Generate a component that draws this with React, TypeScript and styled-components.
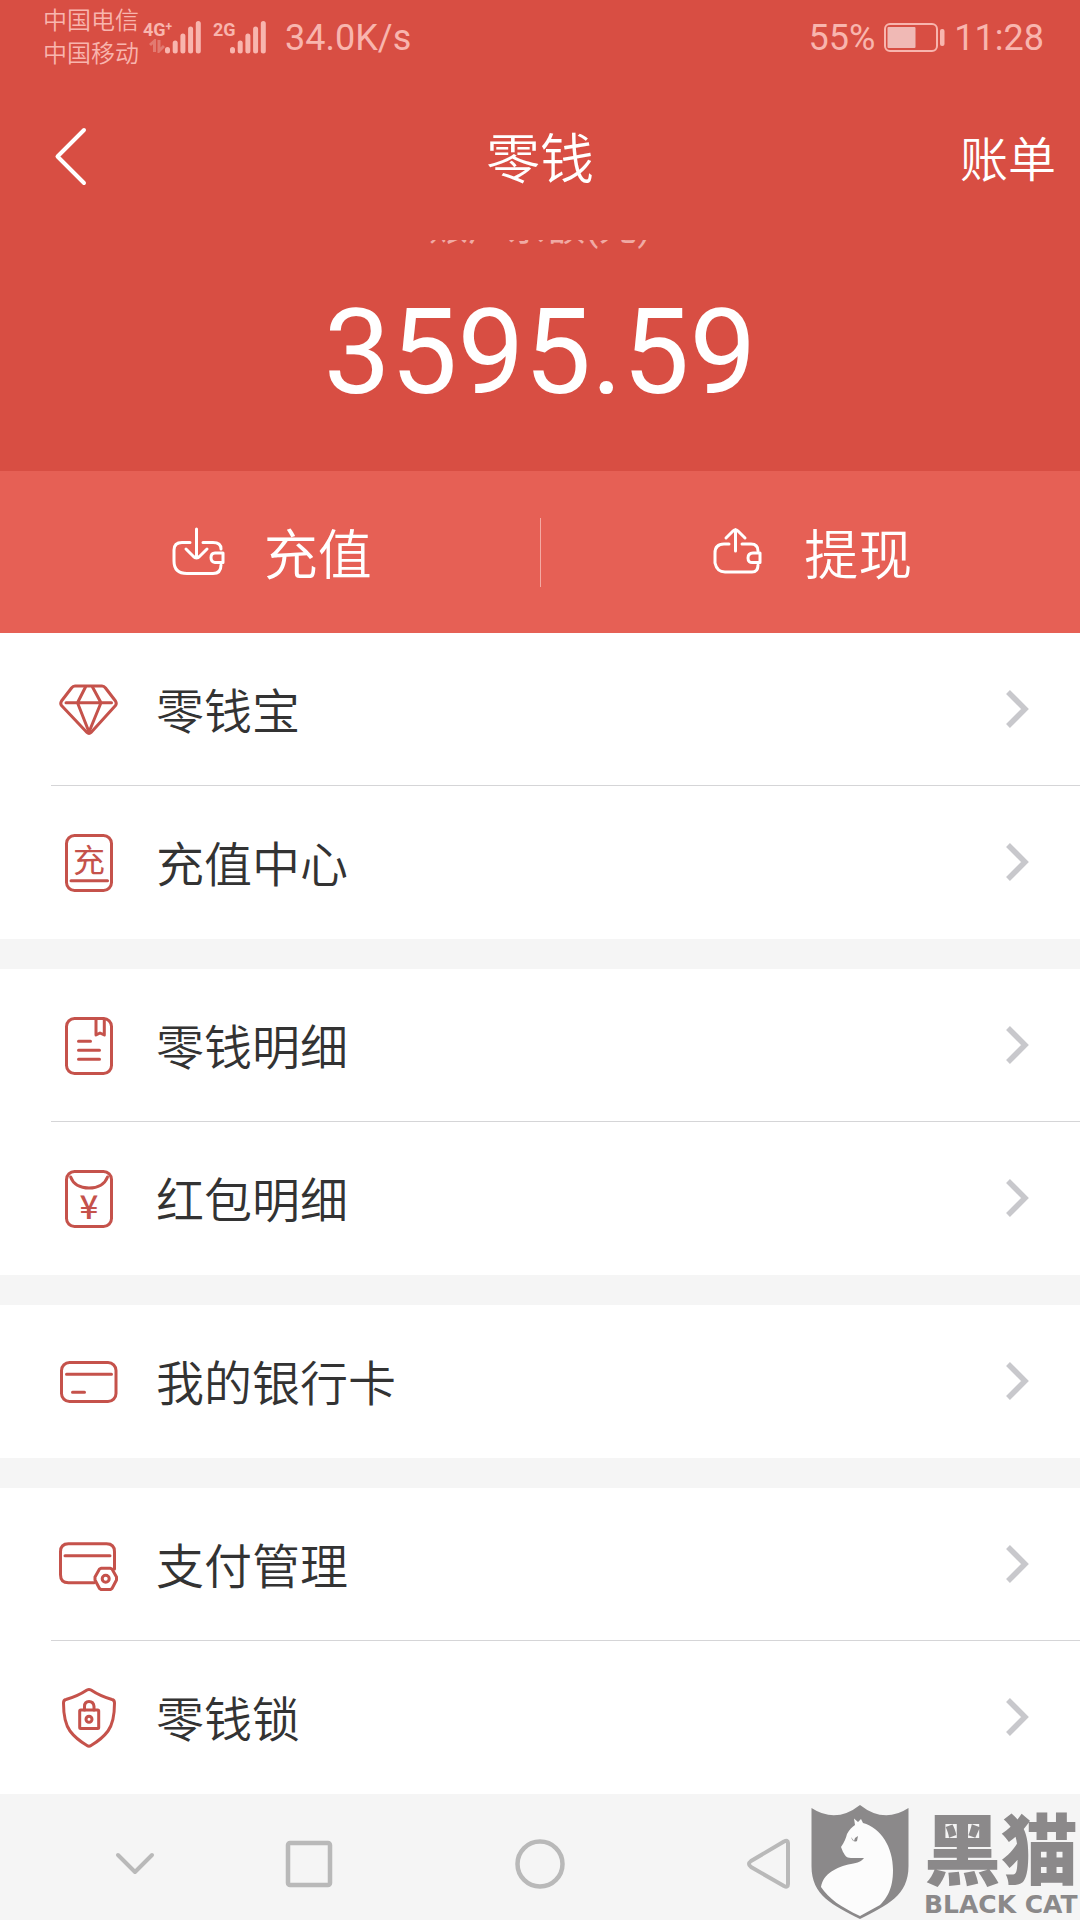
import React from 'react';
import styled, { createGlobalStyle } from 'styled-components';

const sans = `Roboto, "Noto Sans CJK SC", sans-serif`;
const cjk = `"Noto Sans CJK SC", sans-serif`;
const red = '#d84e43';
const iconRed = '#c5524b';
const statusInk = '#f8b5ae';

const GlobalStyle = createGlobalStyle`
  * { box-sizing: border-box; }
  body { margin: 0; background: #f5f5f5; font-family: ${sans}; color: #333; }
  button { border: 0; padding: 0; margin: 0; background: none; font: inherit; color: inherit; cursor: pointer; }
  svg { display: block; flex: none; }
`;

const Page = styled.div`
  display: flex;
  flex-direction: column;
  min-height: 100vh;
`;

const Header = styled.header`
  background: ${red};
  color: #fff;
`;

const StatusBar = styled.div`
  display: flex;
  align-items: center;
  justify-content: space-between;
  height: 75px;
  padding: 0 36px 0 43px;
  color: ${statusInk};
  font-size: 36px;
  line-height: 40px;
`;

const StatusGroup = styled.div<{ $gap: number }>`
  display: flex;
  align-items: center;
  gap: ${(p) => p.$gap}px;
`;

const Carriers = styled.div`
  font-size: 24px;
  line-height: 33px;
  font-weight: 350;
`;

const Signal = styled.div`
  display: flex;
  align-items: flex-start;
`;

const NetType = styled.div<{ $width: number }>`
  display: flex;
  flex-direction: column;
  align-items: flex-end;
  width: ${(p) => p.$width}px;
  font: bold 18px/18px Roboto, sans-serif;
  white-space: nowrap;
`;

const NetLabel = styled.span`
  display: flex;
  align-self: flex-start;
  line-height: 18px;
`;

const Plus = styled.sup`
  font-size: 12px;
  line-height: 12px;
  vertical-align: top;
`;

const TitleBar = styled.div`
  display: grid;
  grid-template-columns: 1fr auto 1fr;
  align-items: center;
  height: 165px;
  padding: 0 24px 4px;
`;

const BackButton = styled.button`
  justify-self: start;
  padding: 10px 24px;
`;

const Title = styled.h1`
  margin: 0;
  font-family: ${cjk};
  font-size: 54px;
  line-height: 72px;
  font-weight: 350;
`;

const BillButton = styled.button`
  justify-self: end;
  font-family: ${cjk};
  font-size: 48px;
  line-height: 64px;
  font-weight: 350;
`;

const Balance = styled.section`
  display: flex;
  flex-direction: column;
  align-items: center;
  padding-bottom: 58px;
`;

const LabelWindow = styled.div`
  display: flex;
  align-items: flex-end;
  height: 12px;
  overflow: hidden;
  color: #f0aaa4;
  font-size: 39px;
  line-height: 50px;
`;

const Amount = styled.div`
  margin-top: 41px;
  font-size: 119px;
  line-height: 120px;
`;

const Actions = styled.div`
  display: flex;
  align-items: center;
  height: 162px;
  background: #e66055;
  color: #fff;
`;

const Action = styled.button`
  display: flex;
  flex: 1;
  align-items: center;
  justify-content: center;
  gap: 42px;
  height: 100%;
  font-family: ${cjk};
  font-size: 54px;
  line-height: 72px;
  font-weight: 350;
`;

const ActionRule = styled.div`
  width: 1px;
  height: 69px;
  background: #f4aaa3;
`;

const Groups = styled.main`
  display: flex;
  flex-direction: column;
  gap: 30px;
`;

const Group = styled.section`
  padding-left: 51px;
  background: #fff;
`;

const Row = styled.button`
  display: flex;
  align-items: center;
  width: 100%;
  height: 153px;
  padding: 0 50px 0 7px;
  border-bottom: 1px solid #d5d5d7;
  text-align: left;

  &:last-child {
    border-bottom-color: transparent;
  }
`;

const RowLabel = styled.span`
  flex: 1;
  margin-left: 38px;
  padding-bottom: 2px;
  font-family: ${cjk};
  font-size: 48px;
  line-height: 64px;
  font-weight: 350;
`;

const NavBar = styled.nav`
  position: relative;
  display: grid;
  grid-template-columns: 29fr 29fr 48fr 29fr 29fr;
  height: 126px;
  padding: 18px 48px 0;
  background: #f5f5f5;
`;

const NavButton = styled.button`
  display: flex;
  align-items: center;
  justify-content: center;
  height: 108px;
  padding-bottom: 4px;
`;

const Watermark = styled.div`
  position: absolute;
  right: 0;
  bottom: 0;
  display: flex;
  gap: 15px;
  height: 116px;
  color: #8b898a;
`;

const Brand = styled.div`
  display: flex;
  flex-direction: column;
  justify-content: space-between;
  width: 156px;
  white-space: nowrap;
`;

const BrandName = styled.strong`
  font: 900 77px/84px ${cjk};
`;

const BrandLatin = styled.strong`
  font: bold 25px/30px "DejaVu Sans", sans-serif;
`;

function Bars() {
  return (
    <svg width="36" height="34" viewBox="0 0 36 34" stroke={statusInk} strokeWidth="5" strokeLinecap="round">
      <path d="M2.5 28.500V30M10.2 22V30M17.9 15V30M25.6 8V30M33.3 2.500V30" />
    </svg>
  );
}

function DataArrows() {
  return (
    <svg width="16" height="14" viewBox="0 0 16 14" fill="none" stroke="#e27a71" strokeWidth="3">
      <path d="M1 6L5.500 2V13M10 1V12L15 7" />
    </svg>
  );
}

function Battery() {
  return (
    <svg width="61" height="30" viewBox="0 0 61 30">
      <rect x="1" y="1" width="52" height="27" rx="5" fill="none" stroke={statusInk} strokeWidth="2" />
      <rect x="3.500" y="4" width="28" height="21" rx="1" fill="#f0b9b5" />
      <rect x="56" y="6" width="4.500" height="17" rx="2" fill={statusInk} />
    </svg>
  );
}

function WalletIcon({ out = false }: { out?: boolean }) {
  return (
    <svg width="54" height="54" viewBox="0 0 54 54" overflow="visible" fill="none" stroke="#fff" strokeWidth="3" strokeLinecap="round" strokeLinejoin="round">
      {out ? (
        <>
          <path d="M21 19H16Q7 19 7 28V38Q9 47 17 47H44Q50 47 50 40M34 19H43Q50 19 50 26" />
          <path d="M27.500 26V4.500M18 13L25 6Q27.500 3.500 30 6L37 13" />
          <path d="M52 28H45Q40 28 40 33T45 37.500H52Z" />
        </>
      ) : (
        <>
          <path d="M22 17.500H14Q6 17.500 6 25V36Q6 48.500 19 48.500H45Q53 48.500 53 40M35 17.500H45Q53 17.500 53 24" />
          <path d="M28.500 4V32M18 24L25 31Q28.500 35 32 31L39 24" />
          <path d="M55 28H47Q43 28 43 32.500T47 37.500H55Z" />
        </>
      )}
    </svg>
  );
}

type IconName = 'diamond' | 'topup' | 'detail' | 'packet' | 'card' | 'manage' | 'lock';

const frame = <rect x="8.500" y="3.500" width="45" height="55" rx="8" />;

const drawings: Record<IconName, React.ReactNode> = {
  diamond: (
    <>
      <path d="M17 7H44Q46 7 47.500 9L57.500 22Q59 24.500 57.500 26.500L33 53.500Q31 55.500 29 53.500L3.500 26.500Q2 24.500 3.500 22L13.500 9Q15 7 17 7Z" />
      <path d="M8 23.700H53.500M27.500 8L19.500 23.700L31 53L43 23.700L34.500 8" />
    </>
  ),
  topup: (
    <>
      {frame}
      <path d="M13 48.700H49.500" />
      <text x="31" y="40" textAnchor="middle" fontSize="32" fontFamily="Noto Sans CJK SC" fill={iconRed} stroke="none">充</text>
    </>
  ),
  detail: (
    <>
      {frame}
      <path d="M38 4V20L42 18L46.300 20V4M20.500 26.300H32.500M20.500 35.300H41.500M20.500 44.300H41.500" />
    </>
  ),
  packet: (
    <>
      {frame}
      <path d="M12.700 9C15 16 22 20 31 20S47 16 49.500 9" />
      <text x="31" y="51" textAnchor="middle" fontSize="33" fontWeight="500" fontFamily="Noto Sans CJK SC" fill={iconRed} stroke="none">¥</text>
    </>
  ),
  card: (
    <>
      <rect x="3.500" y="11.500" width="54.500" height="39" rx="8" />
      <path d="M8.500 23.300H53.500M14.500 41.300H26.500" />
    </>
  ),
  manage: (
    <>
      <path d="M36 48.700H10.500Q2.500 48.700 2.500 40.700V17.700Q2.500 9.700 10.500 9.700H48.500Q56.500 9.700 56.500 17.700V35M7 21.700H52" />
      <path d="M43 34.300H52.500L54 35L58.500 43V46L54 54.500L52.500 55.500H43L41.500 54.500L37 46V43L41.500 35Z" />
      <circle cx="47.700" cy="44.700" r="3.500" />
    </>
  ),
  lock: (
    <>
      <path d="M29 3Q31 2 33 3Q42 9 54 12.500Q56.500 13 56.500 16Q56.500 35 50 44Q44 52 33 58.500Q31 60 29 58.500Q18 52 12 44Q5.500 35 5.500 16Q5.500 13 8 12.500Q20 9 29 3Z" />
      <rect x="21.700" y="23" width="19" height="18.500" rx="1" />
      <path d="M26.500 23V19.500Q26.500 14.500 31 14.500T36 19.500V23" />
      <circle cx="31" cy="32.300" r="3" />
    </>
  ),
};

function RowIcon({ name }: { name: IconName }) {
  return (
    <svg width="60" height="60" viewBox="0 0 60 60" overflow="visible" fill="none" stroke={iconRed} strokeWidth="3" strokeLinecap="round" strokeLinejoin="round">
      {drawings[name]}
    </svg>
  );
}

const groups: { icon: IconName; label: string }[][] = [
  [
    { icon: 'diamond', label: '零钱宝' },
    { icon: 'topup', label: '充值中心' },
  ],
  [
    { icon: 'detail', label: '零钱明细' },
    { icon: 'packet', label: '红包明细' },
  ],
  [{ icon: 'card', label: '我的银行卡' }],
  [
    { icon: 'manage', label: '支付管理' },
    { icon: 'lock', label: '零钱锁' },
  ],
];

const navShapes: { label: string; shape: React.ReactNode }[] = [
  { label: '收起', shape: <path d="M9 17L26 34L43 17" strokeWidth="4" /> },
  { label: '最近任务', shape: <rect x="5" y="5" width="42" height="42" rx="2" /> },
  { label: '主屏幕', shape: <circle cx="26" cy="26" r="22.500" /> },
  { label: '返回', shape: <path d="M39 3.500Q43 1.500 43 5V46Q43 50 39 48L6 29Q2 26 6 23Z" strokeWidth="4" /> },
];

export default function App() {
  return (
    <Page>
      <GlobalStyle />
      <Header>
        <StatusBar>
          <StatusGroup $gap={19}>
            <StatusGroup $gap={12}>
              <StatusGroup $gap={4}>
                <Carriers>
                  <div>中国电信</div>
                  <div>中国移动</div>
                </Carriers>
                <Signal>
                  <NetType $width={22}>
                    <NetLabel>4G<Plus>+</Plus></NetLabel>
                    <DataArrows />
                  </NetType>
                  <Bars />
                </Signal>
              </StatusGroup>
              <Signal>
                <NetType $width={17}>
                  <NetLabel>2G</NetLabel>
                </NetType>
                <Bars />
              </Signal>
            </StatusGroup>
            <span>34.0K/s</span>
          </StatusGroup>
          <StatusGroup $gap={9}>
            <span>55%</span>
            <Battery />
            <span>11:28</span>
          </StatusGroup>
        </StatusBar>
        <TitleBar>
          <BackButton aria-label="返回">
            <svg width="40" height="60" viewBox="0 0 40 60" fill="none" stroke="#fff" strokeWidth="4" strokeLinecap="round" strokeLinejoin="round">
              <path d="M36 4L9.500 30.500L36 57" />
            </svg>
          </BackButton>
          <Title>零钱</Title>
          <BillButton>账单</BillButton>
        </TitleBar>
        <Balance>
          <LabelWindow>账户余额(元)</LabelWindow>
          <Amount>3595.59</Amount>
        </Balance>
      </Header>
      <Actions>
        <Action>
          <WalletIcon />
          充值
        </Action>
        <ActionRule />
        <Action>
          <WalletIcon out />
          提现
        </Action>
      </Actions>
      <Groups>
        {groups.map((rows) => (
          <Group key={rows[0].icon}>
            {rows.map((row) => (
              <Row key={row.icon}>
                <RowIcon name={row.icon} />
                <RowLabel>{row.label}</RowLabel>
                <svg width="24" height="40" viewBox="0 0 24 40" fill="none" stroke="#c8c8cc" strokeWidth="5.500">
                  <path d="M2 3L19 20L2 37" />
                </svg>
              </Row>
            ))}
          </Group>
        ))}
      </Groups>
      <NavBar>
        {navShapes.map((item) => (
          <NavButton key={item.label} aria-label={item.label}>
            <svg width="52" height="52" viewBox="0 0 52 52" fill="none" stroke="#b9b9b9" strokeWidth="4.500" strokeLinecap="round" strokeLinejoin="round">
              {item.shape}
            </svg>
          </NavButton>
        ))}
        <Watermark>
          <svg width="98" height="116" viewBox="0 0 98 116">
            <path d="M.5 4Q25 20 49 1Q73 20 97.500 4V62C97.500 92 76 101 49 115C22 101 .5 92 .5 62Z" fill="#8b898a" />
            <path d="M43 14.500L47 18L50 15L52 19C70 24 82 43 82 66C82 85 76 94 69 101L49 112C30 103 18 95 10 83C12 70 25 63 40 60C47 59 51 57 53 54H40C35 54 34 51 32 48L30 43C33 39 35 34 36 30C38 26 41 23 44 21Z" fill="#fcfcfc" />
            <path d="M40 33Q42 39 46 37L47 32L44 34L43 37Z" fill="#8b898a" />
          </svg>
          <Brand>
            <BrandName>黑猫</BrandName>
            <BrandLatin>BLACK CAT</BrandLatin>
          </Brand>
        </Watermark>
      </NavBar>
    </Page>
  );
}
